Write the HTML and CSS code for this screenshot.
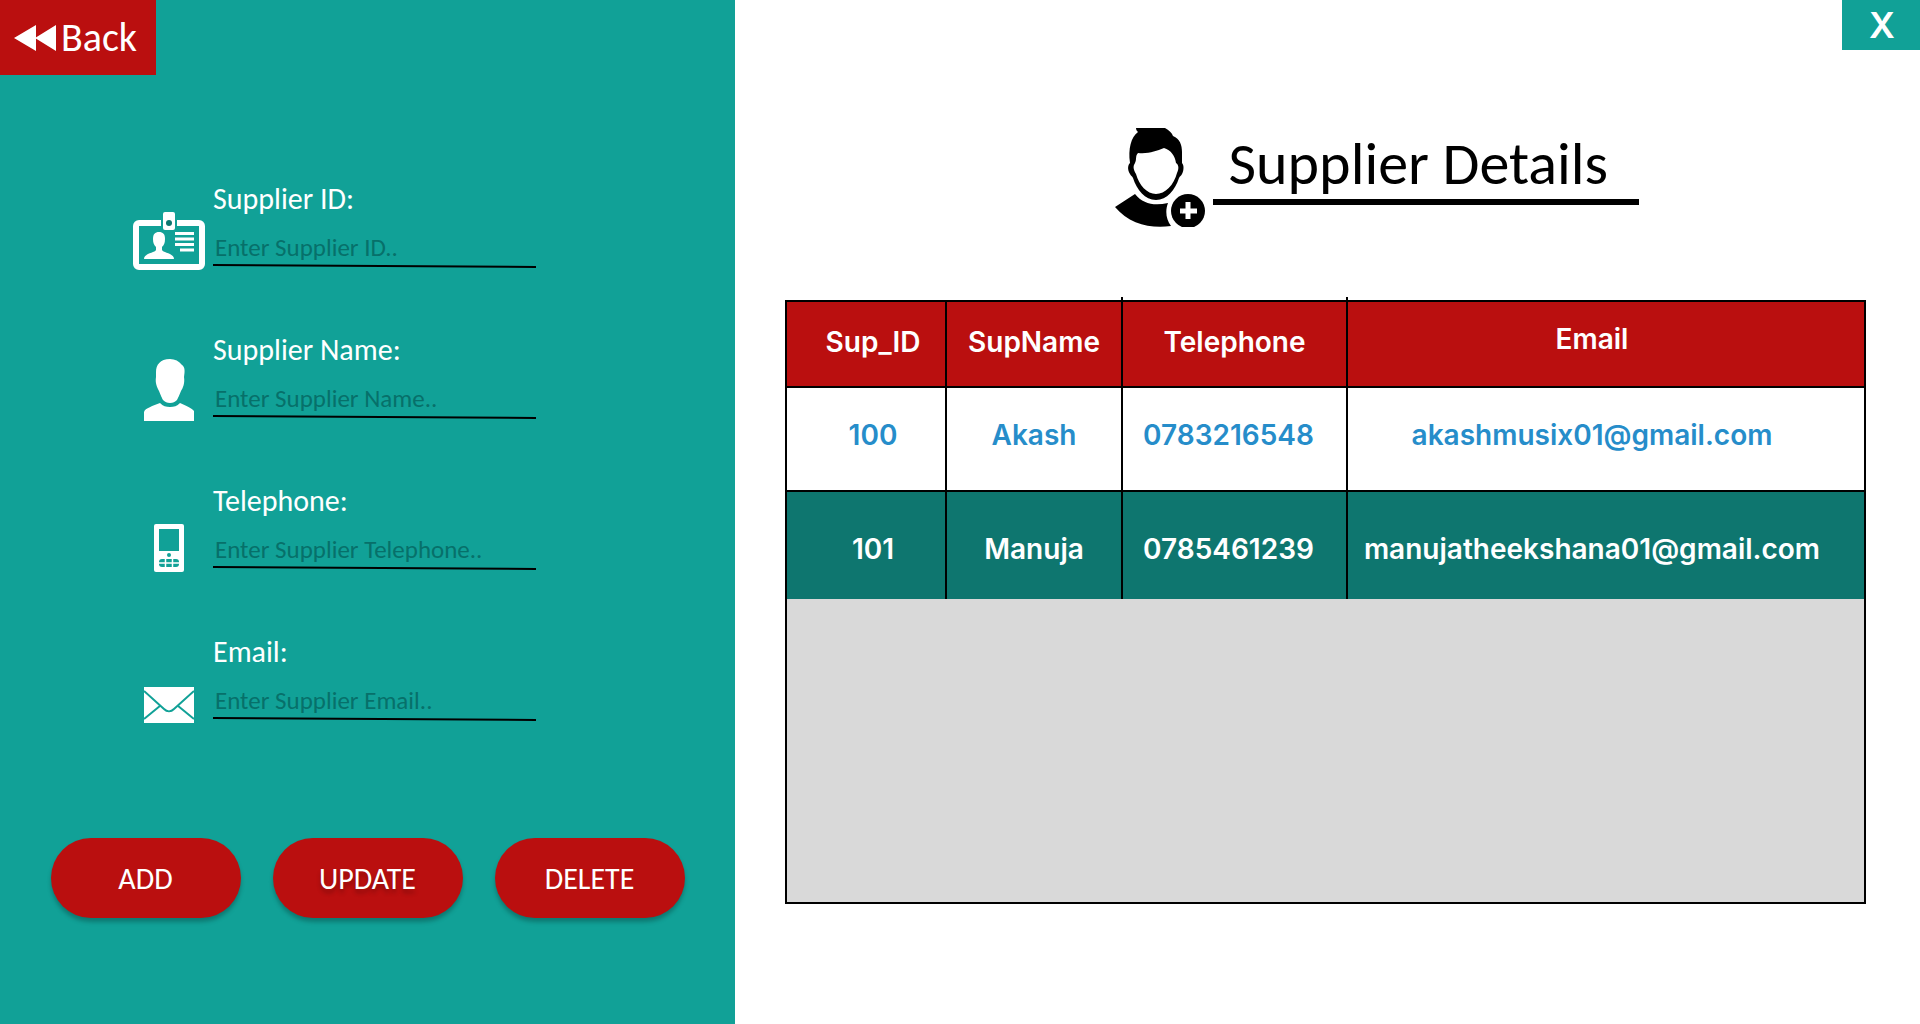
FILE: index.html
```html
<!DOCTYPE html>
<html lang="en">
<head>
<meta charset="utf-8">
<meta name="viewport" content="width=device-width, initial-scale=1">
<title>Supplier Details</title>
<link rel="stylesheet" href="styles.css">
</head>
<body>
<div class="layout">
  <section class="sidebar">
    <button class="back" type="button">
      <svg width="43" height="26" viewBox="0 0 43 26" fill="#fff" aria-hidden="true"><path d="M0 13 22 0v26zM21 13 42 0v26z"/></svg>
      Back
    </button>
    <form class="form">
      <div class="fields">
        <div class="field">
          <svg class="icon" width="72" height="58" viewBox="0 0 72 58" aria-hidden="true">
            <rect x="3" y="11" width="66" height="44" rx="3" fill="none" stroke="#fff" stroke-width="6"/>
            <rect x="28" y="5" width="16" height="14" fill="#11a197"/>
            <rect x="30" y="0" width="12" height="18" rx="2" fill="#fff"/>
            <circle cx="36" cy="11" r="3" fill="#0d766f"/>
            <path d="M26 20c-4 0-6 2-6 7 0 4 1 6 3 8v3c-1 3-12 3-12 9h30c0-6-11-6-12-9v-3c2-2 3-4 3-8 0-5-2-7-6-7z" fill="#fff"/>
            <path d="M42 21.500h19M42 27h19M42 32.500h19M47 38h14" stroke="#fff" stroke-width="3"/>
          </svg>
          <label class="label" for="sup-id">Supplier ID:</label>
          <input class="input" id="sup-id" type="text" placeholder="Enter Supplier ID..">
          <svg class="rule" viewBox="0 0 323 4" preserveAspectRatio="none" aria-hidden="true"><path d="M0 0 323 2v2L0 2z"/></svg>
        </div>
        <div class="field">
          <svg class="icon" width="50" height="62" viewBox="0 0 50 62" fill="#fff" aria-hidden="true">
            <path d="M26 0C16 0 12 6 12 13v5c-1 6 1 10 3 14 2 5 3 7 4 9 2 2 4 3 7 3s5-1 7-3c1-2 2-4 4-9 2-3 4-8 3-14 1-6 1-10-2-12-3-4-7-6-12-6z"/>
            <path d="M0 62v-9c1-4 9-6 16-9 3 3 6 4 10 4s7-1 10-4c6 3 12 5 14 8v10z"/>
          </svg>
          <label class="label" for="sup-name">Supplier Name:</label>
          <input class="input" id="sup-name" type="text" placeholder="Enter Supplier Name..">
          <svg class="rule" viewBox="0 0 323 4" preserveAspectRatio="none" aria-hidden="true"><path d="M0 0 323 2v2L0 2z"/></svg>
        </div>
        <div class="field">
          <svg class="icon" width="30" height="48" viewBox="0 0 30 48" aria-hidden="true">
            <rect width="30" height="48" rx="2" fill="#fff"/>
            <rect x="5" y="5" width="20" height="22" fill="#11a197"/>
            <circle cx="15" cy="31" r="2" fill="#11a197"/>
            <rect x="5" y="35" width="20" height="8" rx="3" fill="#11a197"/>
            <path d="M5 39h20M11.500 35v8M18.500 35v8" stroke="#fff" stroke-width="1.500"/>
          </svg>
          <label class="label" for="sup-tel">Telephone:</label>
          <input class="input" id="sup-tel" type="tel" placeholder="Enter Supplier Telephone..">
          <svg class="rule" viewBox="0 0 323 4" preserveAspectRatio="none" aria-hidden="true"><path d="M0 0 323 2v2L0 2z"/></svg>
        </div>
        <div class="field">
          <svg class="icon" width="50" height="36" viewBox="0 0 50 36" aria-hidden="true">
            <path fill="#fff" d="M0 0h50v36H0z"/>
            <path d="M0 4 20 22c3 3 7 3 10 0L50 4M0 32l16.500-13.500M50 32 33.500 18.500" fill="none" stroke="#11a197" stroke-width="2"/>
          </svg>
          <label class="label" for="sup-email">Email:</label>
          <input class="input" id="sup-email" type="email" placeholder="Enter Supplier Email..">
          <svg class="rule" viewBox="0 0 323 4" preserveAspectRatio="none" aria-hidden="true"><path d="M0 0 323 2v2L0 2z"/></svg>
        </div>
      </div>
      <div class="actions">
        <button class="action" type="button">ADD</button>
        <button class="action action-raised" type="button">UPDATE</button>
        <button class="action" type="button">DELETE</button>
      </div>
    </form>
  </section>
  <main class="main">
    <button class="close" type="button">X</button>
    <header class="heading">
      <svg width="90" height="99" viewBox="0 0 90 99" aria-hidden="true">
        <path d="M21 0h29c4 2 7 5 8 8 7 3 9 9 9 16v11c2 2 2 7 0 11-1 2-2 2-3 4-4 12-12 22-23 22S22 62 18 50c-1-2-2-2-3-4-3-5-2-9 0-11-2-14 1-26 8-31-1-1-2-2-2-4z"/>
        <path d="M23 25c11 1 18-2 26-5 7 2 11 8 12 15 3 2 3 6 1 10-3 12-12 21-21 21s-17-9-20-20c-3-5-3-8-1-11 2-4 0-7 3-10z" fill="#fff"/>
        <path d="M0 79 20 66c8 10 19 12 33 9-3 8-2 16 3 23C36 101 14 96 0 79z"/>
        <circle cx="73" cy="83" r="17"/>
        <path d="M65 83h17M73 74v17" stroke="#fff" stroke-width="5"/>
      </svg>
      <h1 class="title">Supplier Details</h1>
    </header>
    <div class="grid-box">
      <table class="grid">
        <colgroup><col class="c-id"><col class="c-name"><col class="c-tel"><col></colgroup>
        <thead>
          <tr><th>Sup_ID</th><th class="tick">SupName</th><th class="tick">Telephone</th><th>Email</th></tr>
        </thead>
        <tbody>
          <tr><td>100</td><td>Akash</td><td class="phone">0783216548</td><td>akashmusix01@gmail.com</td></tr>
          <tr class="selected"><td>101</td><td>Manuja</td><td class="phone">0785461239</td><td>manujatheekshana01@gmail.com</td></tr>
        </tbody>
      </table>
    </div>
  </main>
</div>
</body>
</html>
```
FILE: styles.css
```css
* { box-sizing: border-box; }

body {
  margin: 0;
  font-family: Carlito, Lato, sans-serif;
  background: #fff;
  color: #000;
}

button {
  border: 0;
  padding: 0;
  font-family: inherit;
  color: #fff;
  cursor: pointer;
}

.layout {
  display: grid;
  grid-template-columns: 49fr 79fr;
  min-height: 100vh;
}

/* Form side */
.sidebar {
  background: #11a197;
  display: flex;
  flex-direction: column;
  align-items: flex-start;
}

.back {
  display: flex;
  align-items: center;
  gap: 4px;
  height: 75px;
  padding: 0 19px 0 14px;
  background: #ba0f0f;
  font-size: 40px;
}

.form { width: 100%; padding-top: 106px; }

.fields {
  display: grid;
  gap: 64px;
  padding-left: 133px;
}

.field {
  display: grid;
  grid-template-columns: 72px 323px;
  grid-template-rows: 36px 47px 4px;
  column-gap: 8px;
}

.icon {
  grid-row: 1 / 4;
  align-self: end;
  justify-self: center;
  margin-bottom: -2px;
}

.label {
  font-size: 30px;
  line-height: 36px;
  color: #fff;
}

.input {
  grid-column: 2;
  width: 100%;
  padding: 14px 2px 0;
  border: 0;
  background: none;
  font: inherit;
  font-size: 25px;
  color: #fff;
  outline: none;
}

.input::placeholder { color: #07706a; opacity: 1; }

.rule { grid-column: 2; width: 100%; height: 4px; }

.actions {
  display: flex;
  justify-content: center;
  gap: 32px;
  padding: 117px 0 40px;
}

.action {
  width: 190px;
  height: 80px;
  border-radius: 40px;
  background: #ba0f0f;
  box-shadow: 0 4px 4px rgba(0, 0, 0, .25);
  font-size: 30px;
}

.action-raised { text-shadow: 0 4px 4px rgba(0, 0, 0, .25); }

/* Table side */
.main {
  display: flex;
  flex-direction: column;
  padding: 0 54px 40px 50px;
}

.close {
  align-self: flex-end;
  width: 78px;
  height: 50px;
  margin-right: -54px;
  padding-left: 2px;
  background: #11a197;
  font: 600 36px/48px Inter, sans-serif;
}

.heading {
  display: flex;
  align-items: flex-start;
  align-self: center;
  gap: 8px;
  margin: 78px 0 73px 102px;
}

.title {
  width: 426px;
  margin: 0;
  padding-left: 16px;
  border-bottom: 6px solid #000;
  font-size: 60px;
  font-weight: 400;
  line-height: 71px;
}

.grid-box {
  min-height: 604px;
  border: 2px solid #000;
  background: #d9d9d9;
}

.grid {
  width: 100%;
  table-layout: fixed;
  border-collapse: separate;
  border-spacing: 0;
  font: 600 28px/34px Inter, sans-serif;
  text-align: center;
}

.c-id { width: 160px; }
.c-name { width: 176px; }
.c-tel { width: 225px; }

.grid th,
.grid td {
  padding: 0;
  border-right: 2px solid #000;
  border-bottom: 2px solid #000;
}

.grid th {
  position: relative;
  height: 86px;
  padding-bottom: 4px;
  background: #ba0f0f;
  color: #fff;
  font-weight: 600;
}

.grid td { height: 104px; padding-bottom: 8px; background: #fff; color: #268dca; }
.grid .selected td { height: 107px; padding-top: 6px; padding-bottom: 0; border-bottom: 0; background: #0e766f; color: #fff; }

/* Column lines that rise above the table's top edge */
.tick::after {
  content: "";
  position: absolute;
  top: -5px;
  right: -2px;
  width: 2px;
  height: 5px;
  background: #000;
}

.grid th:first-child,
.grid td:first-child { padding-left: 14px; }

.grid .phone { padding-right: 12px; }

.grid th:last-child,
.grid td:last-child { padding-right: 28px; border-right: 0; }

.grid th:last-child { padding-bottom: 10px; }
```
